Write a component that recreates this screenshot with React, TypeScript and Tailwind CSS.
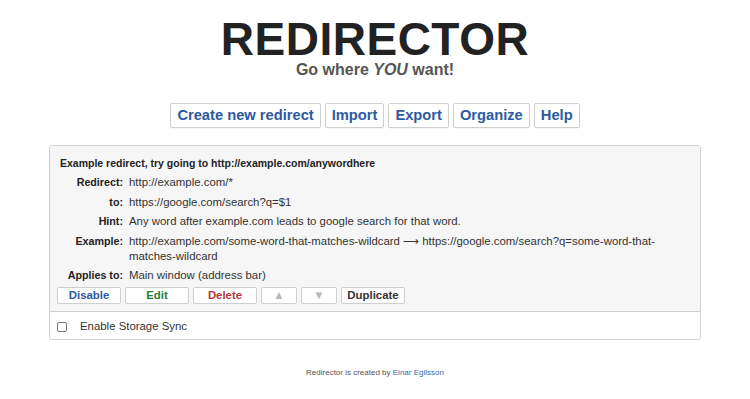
import React from "react";

const navBtn =
  "h-[25px] px-[6px] border border-[#cfcfcf] rounded-[2px] bg-white text-[#2c5aa0] font-bold text-[14.7px] leading-none flex items-center shadow-[0_1px_0_rgba(0,0,0,0.03)]";

const smallBtn =
  "h-[17px] border border-[#cfcfcf] rounded-[2px] bg-white font-bold text-[11.4px] leading-none flex items-center justify-center";

function Row({ label, children }: { label: string; children: React.ReactNode }) {
  return (
    <div className="flex leading-[15px] text-[11.4px]">
      <div className="w-[66px] shrink-0 text-right font-bold text-[10.7px] text-[#222]">{label}</div>
      <div className="pl-[6px] text-[#333] w-[560px]">{children}</div>
    </div>
  );
}

export default function App() {
  return (
    <div
      className="w-[750px] h-[399px] bg-white text-[#222] overflow-hidden"
      style={{ fontFamily: '"Liberation Sans", Arial, sans-serif' }}
    >
      <div className="pt-[18px] flex flex-col items-center">
        <div className="text-[46px] leading-[42px] font-bold text-[#222] tracking-[0.5px]">REDIRECTOR</div>
        <div className="mt-[2px] text-[16px] leading-[16px] font-bold text-[#555]">
          Go where <i>YOU</i> want!
        </div>
      </div>

      <div className="mt-[25px] flex justify-center gap-[4px]">
        <button className={navBtn}>Create new redirect</button>
        <button className={navBtn}>Import</button>
        <button className={navBtn}>Export</button>
        <button className={navBtn}>Organize</button>
        <button className={navBtn}>Help</button>
      </div>

      <div className="mt-[17px] mx-auto w-[652px] border border-[#d2d2d2] rounded-[3px] overflow-hidden">
        <div className="bg-[#f6f6f6] pt-[10px] pb-[7px] px-[7px] border-b border-[#d2d2d2]">
          <div className="pl-[3px] text-[10.5px] leading-[14px] font-bold text-[#222]">
            Example redirect, try going to http://example.com/anywordhere
          </div>
          <div className="mt-[5px] flex flex-col gap-[4.5px]">
            <Row label="Redirect:">http://example.com/*</Row>
            <Row label="to:">https://google.com/search?q=$1</Row>
            <Row label="Hint:">Any word after example.com leads to google search for that word.</Row>
            <Row label="Example:">
              http://example.com/some-word-that-matches-wildcard ⟶ https://google.com/search?q=some-word-that-matches-wildcard
            </Row>
            <Row label="Applies to:">Main window (address bar)</Row>
          </div>
          <div className="mt-[4px] flex gap-[4px]">
            <button className={`${smallBtn} w-[64px] text-[#2c5aa0]`}>Disable</button>
            <button className={`${smallBtn} w-[64px] text-[#2e7d32]`}>Edit</button>
            <button className={`${smallBtn} w-[64px] text-[#b03a3a]`}>Delete</button>
            <button className={`${smallBtn} w-[36px] text-[#b8b8b8] text-[8px]`}>▲</button>
            <button className={`${smallBtn} w-[36px] text-[#b8b8b8] text-[8px]`}>▼</button>
            <button className={`${smallBtn} w-[64px] text-[#333]`}>Duplicate</button>
          </div>
        </div>
        <div className="h-[27px] pt-[3px] bg-white flex items-center pl-[7px]">
          <span className="w-[10px] h-[10px] border border-[#777] rounded-[2px] bg-white" />
          <span className="ml-[13px] text-[11.4px] text-[#333]">Enable Storage Sync</span>
        </div>
      </div>

      <div className="mt-[28px] text-center text-[8px] leading-[10px] text-[#555]">
        Redirector is created by <span className="text-[#3a6aa8]">Einar Egilsson</span>
      </div>
    </div>
  );
}
